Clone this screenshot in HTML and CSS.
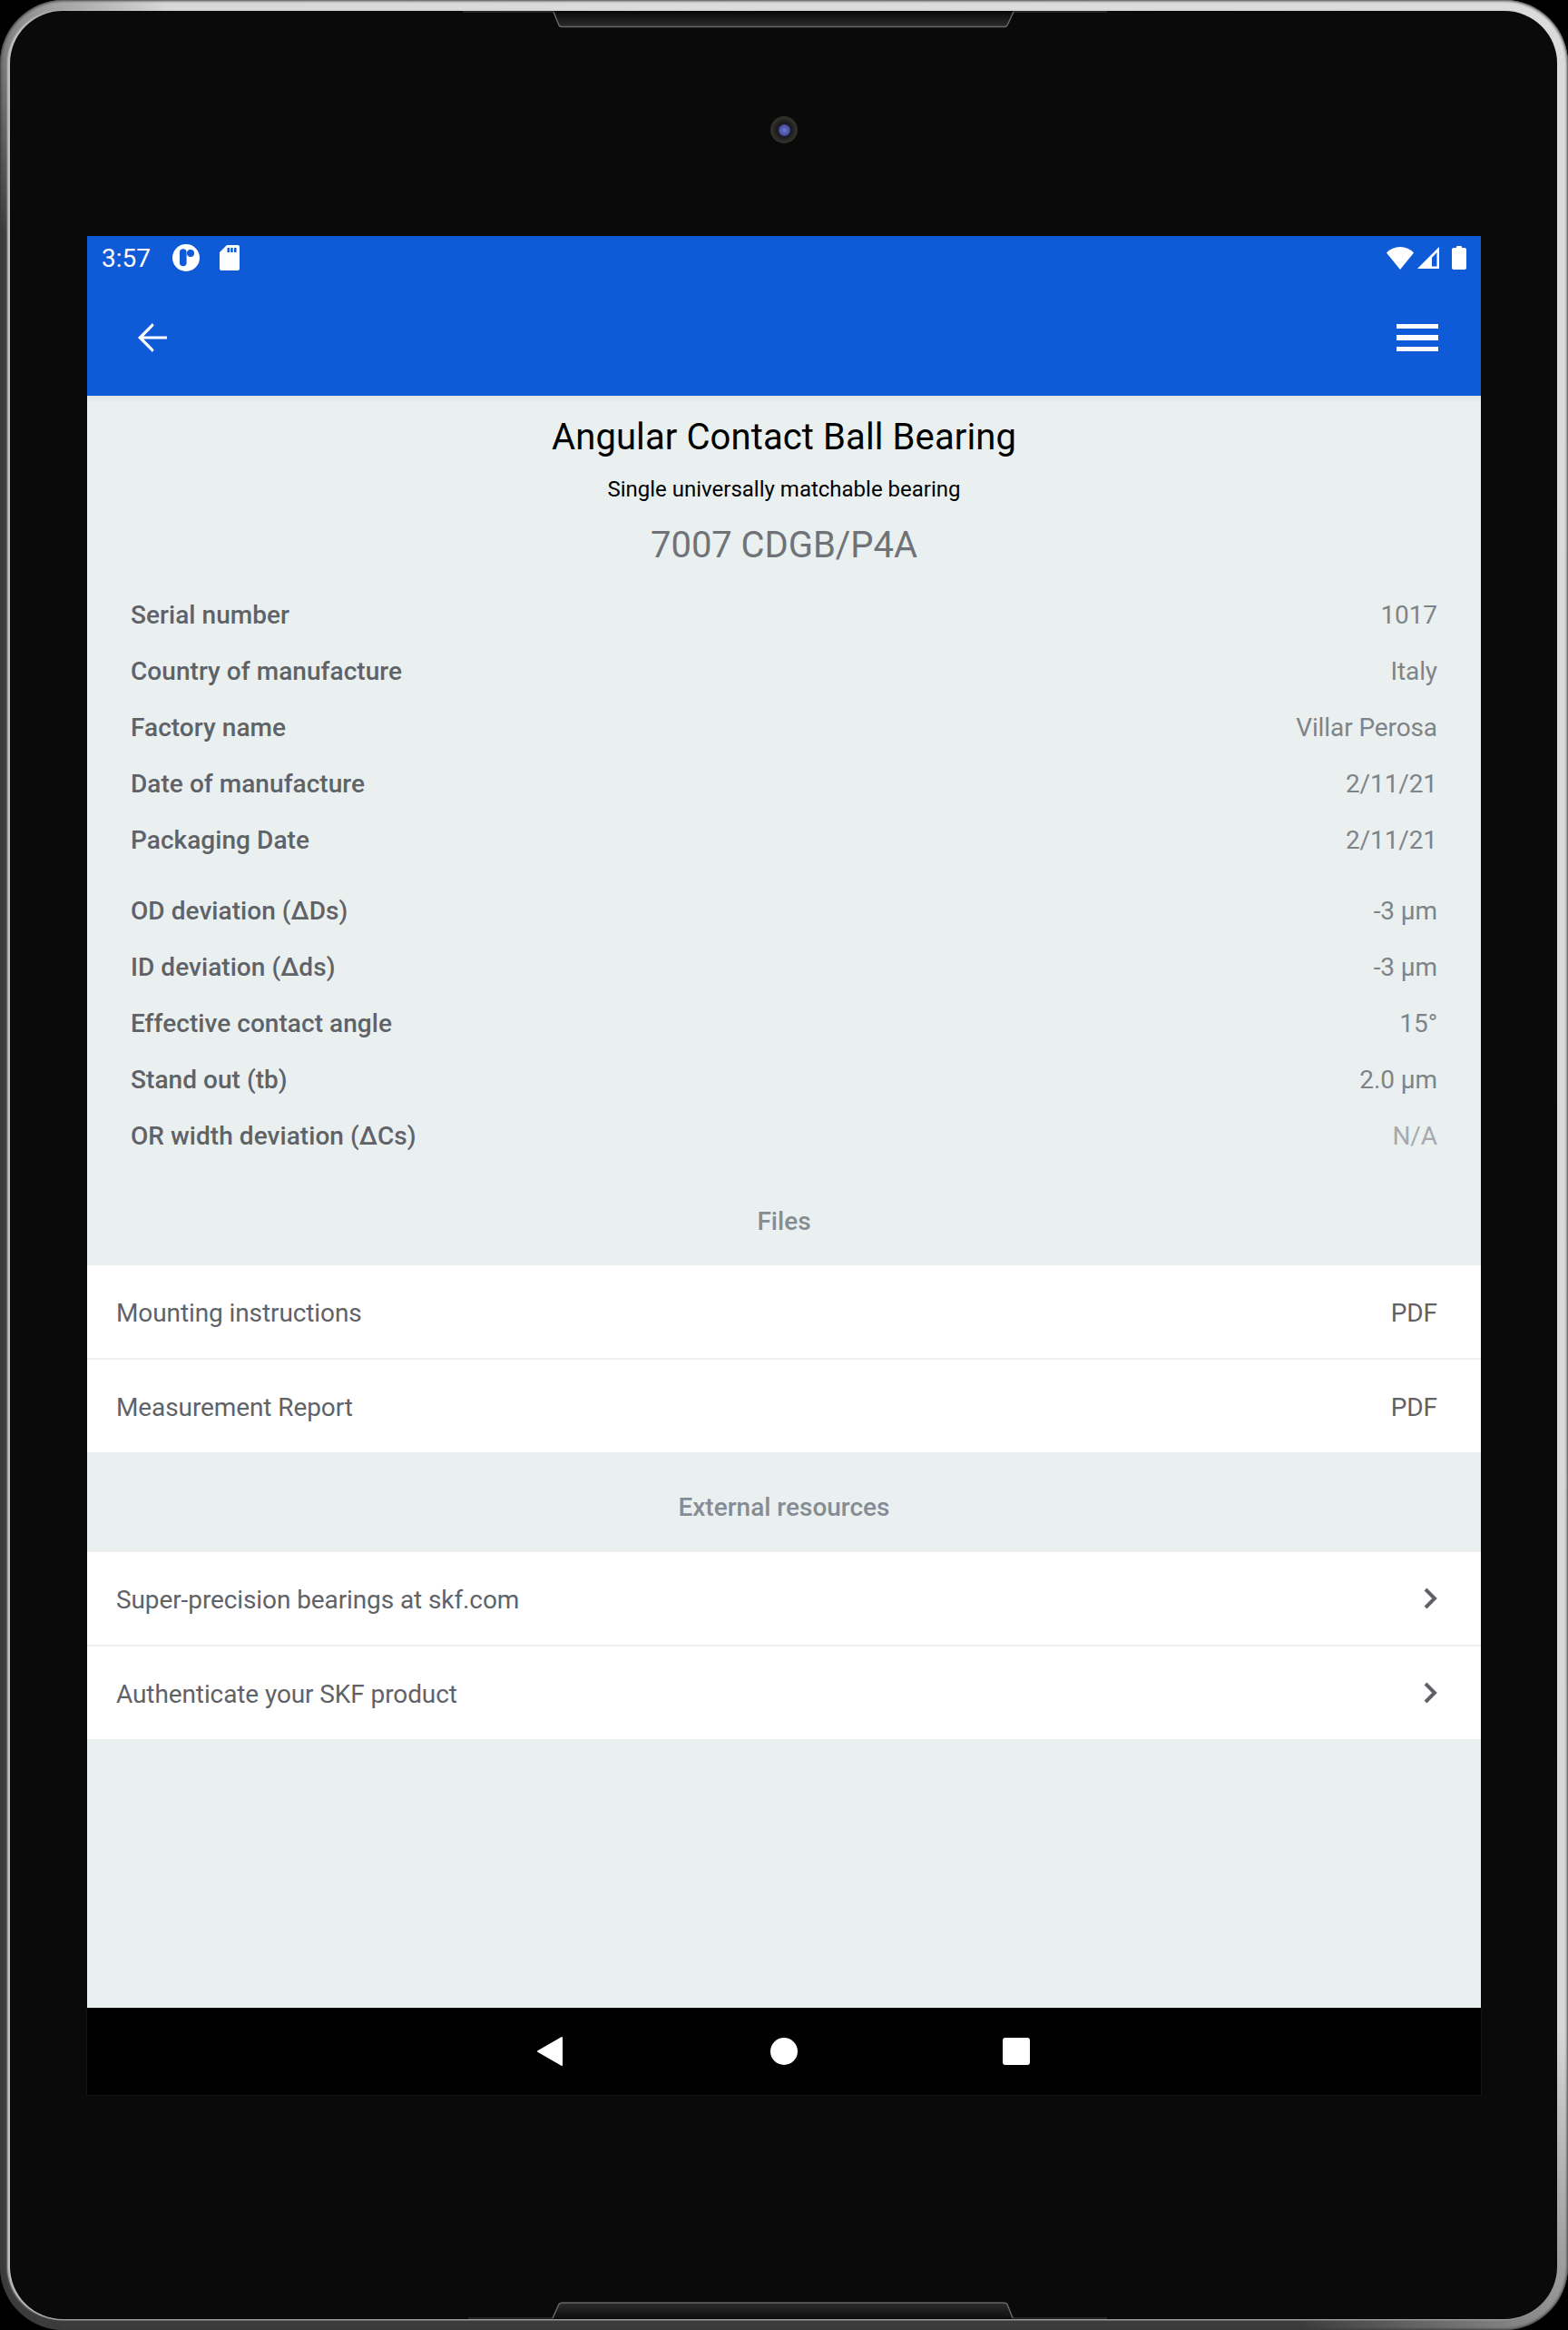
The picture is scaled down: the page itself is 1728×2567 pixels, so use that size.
FILE: index.html
```html
<!DOCTYPE html>
<html lang="en">
<head>
<meta charset="utf-8">
<title>Angular Contact Ball Bearing</title>
<link rel="stylesheet" href="styles.css">
</head>
<body>
<div class="device">
  <div class="bezel">
    <svg class="notch notch-top" width="720" height="20" viewBox="0 0 720 20"><defs><linearGradient id="nt" x1="0" y1="0" x2="0" y2="1"><stop offset="0" stop-color="#0a0a0a"/><stop offset="1" stop-color="#2c2c2c"/></linearGradient></defs><path d="M102 1L108 16Q109 17.500 112 17.500H598Q601 17.500 602 16L609 1Z" fill="url(#nt)"/><path d="M2 1H102M609 1H712" fill="none" stroke="#2e2e2e" stroke-width="1.500"/><path d="M102 1L108 16Q109 17.500 112 17.500H598Q601 17.500 602 16L609 1" fill="none" stroke="#666" stroke-width="1.500"/></svg>
    <div class="camera"><div class="lens"></div></div>
    <div class="screen">
      <header class="appbar">
        <div class="status">
          <div class="status-left">
            <span class="time">3:57</span>
            <svg class="ic-p" width="30" height="30" viewBox="0 0 30 30"><circle cx="15" cy="15" r="15" fill="#fff"/><path d="M8 9a3.800 3.800 0 0 1 7.600 0v11.500a3.800 3.800 0 0 1-7.600 0Z" fill="#0f5ad6"/><circle cx="20" cy="10" r="4" fill="#0f5ad6"/></svg>
            <svg class="ic-sd" width="22" height="28" viewBox="0 0 22 28"><path d="M8 0H20a2 2 0 0 1 2 2V26a2 2 0 0 1-2 2H2a2 2 0 0 1-2-2V8Z" fill="#fff"/><path d="M8.500 3H11V8H8.500ZM12.200 3H14.700V8H12.200ZM16 3H18.500V8H16Z" fill="#0f5ad6"/></svg>
          </div>
          <div class="status-right">
            <svg class="ic-wifi" width="30" height="25" viewBox="0 0 30 25"><path d="M15 25L0 6.500Q6 0 15 0T30 6.500Z" fill="#fff"/></svg>
            <svg class="ic-signal" width="24" height="24" viewBox="0 0 24 24"><path d="M24 0V24H0ZM21.500 6L16 12V21.500H21.500Z" fill="#fff" fill-rule="evenodd"/></svg>
            <svg class="ic-batt" width="16" height="26" viewBox="0 0 16 26"><path d="M5 2V1a1 1 0 0 1 1-1h4a1 1 0 0 1 1 1v1h3a2 2 0 0 1 2 2V24a2 2 0 0 1-2 2H2a2 2 0 0 1-2-2V4a2 2 0 0 1 2-2Z" fill="#fff"/></svg>
          </div>
        </div>
        <div class="toolbar">
          <svg width="48" height="48" viewBox="0 0 24 24"><path d="M20 11.200H7.100l5.700-5.800L12 4l-8 8 8 8 .8-1.400-5.700-5.800H20z" fill="#fff"/></svg>
          <div class="menu"><span></span><span></span><span></span></div>
        </div>
      </header>
      <main class="content">
        <h1 class="title">Angular Contact Ball Bearing</h1>
        <p class="subtitle">Single universally matchable bearing</p>
        <p class="model">7007 CDGB/P4A</p>
        <dl class="specs specs-first">
          <div class="spec"><dt>Serial number</dt><dd>1017</dd></div>
          <div class="spec"><dt>Country of manufacture</dt><dd>Italy</dd></div>
          <div class="spec"><dt>Factory name</dt><dd>Villar Perosa</dd></div>
          <div class="spec"><dt>Date of manufacture</dt><dd>2/11/21</dd></div>
          <div class="spec"><dt>Packaging Date</dt><dd>2/11/21</dd></div>
        </dl>
        <dl class="specs specs-second">
          <div class="spec"><dt>OD deviation (ΔDs)</dt><dd>-3 µm</dd></div>
          <div class="spec"><dt>ID deviation (Δds)</dt><dd>-3 µm</dd></div>
          <div class="spec"><dt>Effective contact angle</dt><dd>15°</dd></div>
          <div class="spec"><dt>Stand out (tb)</dt><dd>2.0 µm</dd></div>
          <div class="spec"><dt>OR width deviation (ΔCs)</dt><dd class="muted">N/A</dd></div>
        </dl>
        <h2 class="section section-files">Files</h2>
        <ul class="list">
          <li class="item"><span>Mounting instructions</span><span>PDF</span></li>
          <li class="item"><span>Measurement Report</span><span>PDF</span></li>
        </ul>
        <h2 class="section section-ext">External resources</h2>
        <ul class="list">
          <li class="item"><span>Super-precision bearings at skf.com</span><svg width="16" height="24" viewBox="0 0 16 24"><path d="M3 2L13 12L3 22" fill="none" stroke="#5f6266" stroke-width="4"/></svg></li>
          <li class="item"><span>Authenticate your SKF product</span><svg width="16" height="24" viewBox="0 0 16 24"><path d="M3 2L13 12L3 22" fill="none" stroke="#5f6266" stroke-width="4"/></svg></li>
        </ul>
      </main>
      <nav class="navbar">
        <svg class="nav-back" width="30" height="34" viewBox="0 0 30 34"><path d="M28 2L2 17L28 32Z" fill="#fff" stroke="#fff" stroke-width="2" stroke-linejoin="round"/></svg>
        <span class="nav-circle"></span>
        <span class="nav-square"></span>
      </nav>
    </div>
    <svg class="notch notch-bottom" width="720" height="20" viewBox="0 0 720 20"><defs><linearGradient id="nb" x1="0" y1="0" x2="0" y2="1"><stop offset="0" stop-color="#2c2c2c"/><stop offset="1" stop-color="#0e0e0e"/></linearGradient></defs><path d="M101 19L108 3.500Q109 2 112 2H598Q601 2 602 3.500L608 19Z" fill="url(#nb)"/><path d="M8 19H101M608 19H712" fill="none" stroke="#2e2e2e" stroke-width="1.500"/><path d="M101 19L108 3.500Q109 2 112 2H598Q601 2 602 3.500L608 19" fill="none" stroke="#666" stroke-width="1.500"/></svg>
  </div>
</div>
</body>
</html>
```
FILE: styles.css
```css
* { box-sizing: border-box; }
html, body { margin: 0; padding: 0; background: #000; }
body { width: 1728px; height: 2567px; overflow: hidden; font-family: Roboto, "Noto Sans", sans-serif; }
h1, h2, p, dl, dt, dd, ul, li { margin: 0; padding: 0; font-weight: 400; }
ul { list-style: none; }

.device {
  width: 1728px; height: 2567px; padding: 12px 12px 12px 11px;
  border-radius: 70px;
  background: conic-gradient(#dcdcdc 0deg, #d8d8d8 138deg, #3c3c3c 156deg, #3c3c3c 320deg, #d8d8d8 332deg, #dcdcdc 360deg);
  box-shadow: inset 0 0 3px 1px #3a3a3a;
}
.bezel {
  position: relative; height: 100%; background: #0a0a0a; border-radius: 58px;
  padding: 248px 0 0 85px;
  box-shadow: -3px 0 2px #c4c4c4, 0 1.500px 0 #8e8e8e;
}
.notch { position: absolute; left: 497px; }
.notch-top { top: 0; }
.notch-bottom { bottom: 0; }
.camera {
  position: absolute; left: 838px; top: 116px; width: 30px; height: 30px; border-radius: 50%;
  background: radial-gradient(circle, #1c1c20 40%, #33332c 66%, #141414 82%, #0c0c0c 100%);
  display: flex; align-items: center; justify-content: center;
}
.lens { width: 13px; height: 13px; border-radius: 50%; background: radial-gradient(circle, #7076cc 0%, #444c9c 65%, #1a1c40 100%); }

.screen { width: 1536px; height: 2048px; display: flex; flex-direction: column; }
.appbar { background: #0f5ad6; color: #fff; height: 176px; }
.status { height: 48px; display: flex; justify-content: space-between; align-items: center; padding: 0 16px; }
.status-left { display: flex; align-items: center; }
.time { font-size: 28px; line-height: 32px; margin-right: 24px; padding-top: 2px; }
.ic-p { margin-right: 22px; }
.status-right { display: flex; align-items: center; }
.ic-signal { margin-left: 4px; }
.ic-batt { margin-left: 14px; }
.toolbar { height: 128px; display: flex; justify-content: space-between; align-items: center; padding: 0 47px 0 48px; }
.menu { display: flex; flex-direction: column; gap: 7px; width: 46px; }
.menu span { display: block; height: 5.500px; background: #fff; }

.content {
  flex: 1; background: linear-gradient(#dfe4e4 0, #eaf0f0 8px);
  padding-top: 22px;
}
.title { font-size: 40px; line-height: 48px; text-align: center; color: #000; letter-spacing: .1px; }
.subtitle { font-size: 24px; line-height: 36px; text-align: center; color: #000; margin-top: 15px; }
.model { font-size: 40px; line-height: 48px; text-align: center; color: #6f7377; margin-top: 20px; letter-spacing: -.05px; }
.specs { padding: 0 48px; }
.specs-first { margin-top: 21px; }
.specs-second { margin-top: 16px; }
.spec { display: flex; justify-content: space-between; align-items: center; height: 62px; font-size: 28px; }
.spec dt { font-weight: 500; color: #5f6368; letter-spacing: .05px; }
.spec dd { color: #7f8488; letter-spacing: -.1px; }
.spec dd.muted { color: #a6aaae; }

.section { font-size: 28px; font-weight: 500; line-height: 42px; text-align: center; color: #858c94; }
.section-files { padding: 43px 0 27px; }
.section-ext { padding: 40px 0 28px; }
.list { background: #fff; }
.item {
  display: flex; justify-content: space-between; align-items: center;
  height: 104px; padding: 0 48px 0 32px; font-size: 28px; color: #5f6368;
  border-bottom: 2px solid #eef1f1;
}
.item span { padding-top: 3px; letter-spacing: -.1px; }
.item:last-child { height: 102px; border-bottom: 0; }

.navbar {
  height: 96px; background: #000;
  box-shadow: -1px 1px 0 #141414, 1px 1px 0 #141414;
  display: flex; align-items: center; justify-content: center; gap: 226px;
}
.nav-back { margin: 0 2px 0 -2px; }
.nav-circle { width: 30px; height: 30px; border-radius: 50%; background: #fff; }
.nav-square { width: 30px; height: 30px; border-radius: 3px; background: #fff; }
```
